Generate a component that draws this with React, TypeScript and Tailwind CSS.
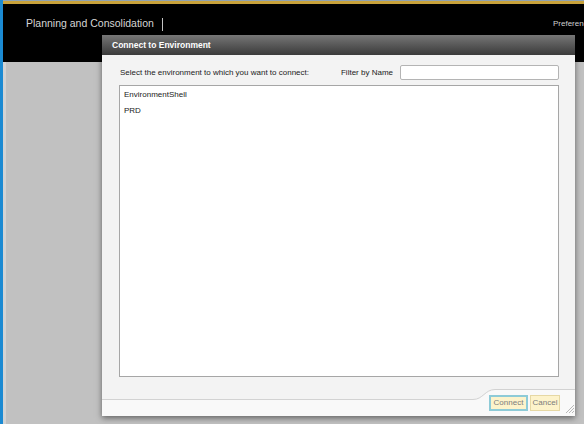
import React from 'react';

// Fenêtre de connexion (modal sur l'écran d'accueil)
const ResizeGrip: React.FC = () => (
  <svg width="9" height="10" viewBox="0 0 9 10" className="absolute right-[1px] bottom-[3px]">
    <path d="M1 10 L9 2 M4 10 L9 5 M7 10 L9 8" stroke="#b8b8b8" strokeWidth="1" fill="none" />
  </svg>
);

const App: React.FC = () => {
  const environnements = ['EnvironmentShell', 'PRD'];

  return (
    <div className="relative w-[584px] h-[424px] overflow-hidden flex bg-[#c1c1c1] font-['Liberation_Sans',Arial,sans-serif]">
      {/* Bordure fenêtre */}
      <div className="w-[3px] shrink-0 bg-[#1b8ad2]" />

      <div className="flex-1 flex flex-col min-w-0">
        <div className="h-px bg-[#8fa3b3]" />
        <div className="h-[3px] bg-[#c8a23b]" />

        {/* Header */}
        <header className="h-[58px] bg-black flex items-start pt-[13px] pl-[23px] shrink-0">
          <span className="text-[10.5px] leading-[12px] text-[#d6d6d6] whitespace-nowrap">Planning and Consolidation</span>
          <span className="ml-[8px] mt-[1px] w-px h-[13px] bg-[#c4c4c4]" />
          <div className="flex-1" />
          <div className="w-[31px] overflow-hidden whitespace-nowrap pt-[2px] text-[8px] leading-[10px] text-[#cfcfcf]">Preferences</div>
        </header>

        <div className="flex-1 border-l-[3px] border-[#d3d3d3] bg-[#c1c1c1]" />
      </div>

      {/* Dialog */}
      <div className="absolute left-[102px] top-[35px] w-[473px] h-[381px] flex flex-col bg-[#f3f3f3] shadow-[0_2px_6px_rgba(0,0,0,0.5)]">
        <div className="h-[20px] shrink-0 flex items-center pl-[10px] bg-gradient-to-b from-[#777777] to-[#3b3b3b] text-white font-bold text-[8.5px]">
          Connect to Environment
        </div>

        <div className="flex flex-col pl-[17px] pr-[16px] pt-[10px]">
          <div className="flex items-center h-[15px] text-[8px] text-[#222]">
            <span className="pl-[1px] whitespace-nowrap">Select the environment to which you want to connect:</span>
            <div className="flex-1" />
            <span className="whitespace-nowrap">Filter by Name</span>
            <input className="ml-[7px] w-[159px] h-[15px] bg-white border border-[#b4b4b4] rounded-[2px] outline-none text-[8px] px-1" />
          </div>

          <div className="mt-[5px] h-[292px] bg-white border border-[#a6a6a6] pt-[1px] pl-[4px] text-[8px] text-[#222]">
            {environnements.map((nom) => (
              <div key={nom} className="h-[16px] flex items-center">{nom}</div>
            ))}
          </div>
        </div>

        {/* Footer */}
        <div className="relative flex-1 flex justify-end items-start pt-[18px] pr-[15px]">
          <svg className="absolute left-0 top-0" width="473" height="39" viewBox="0 0 473 39">
            <path d="M0 22.5 H371 C381 22.5 383 12.5 393 12.5 H473 V39 H0 Z" fill="#f9f9f9" />
            <path d="M0 22.5 H371 C381 22.5 383 12.5 393 12.5 H473" stroke="#d2d2d2" strokeWidth="1" fill="none" />
          </svg>
          <button className="relative w-[39px] h-[16px] bg-[#fdf3cb] border-2 border-[#8ecbd7] text-[8px] text-[#7c7c7c] leading-none">Connect</button>
          <button className="relative ml-[2px] w-[30px] h-[16px] bg-[#fdf3cb] border border-[#e6d8a4] text-[8px] text-[#7c7c7c] leading-none">Cancel</button>
          <ResizeGrip />
        </div>
      </div>
    </div>
  );
};

export default App;
